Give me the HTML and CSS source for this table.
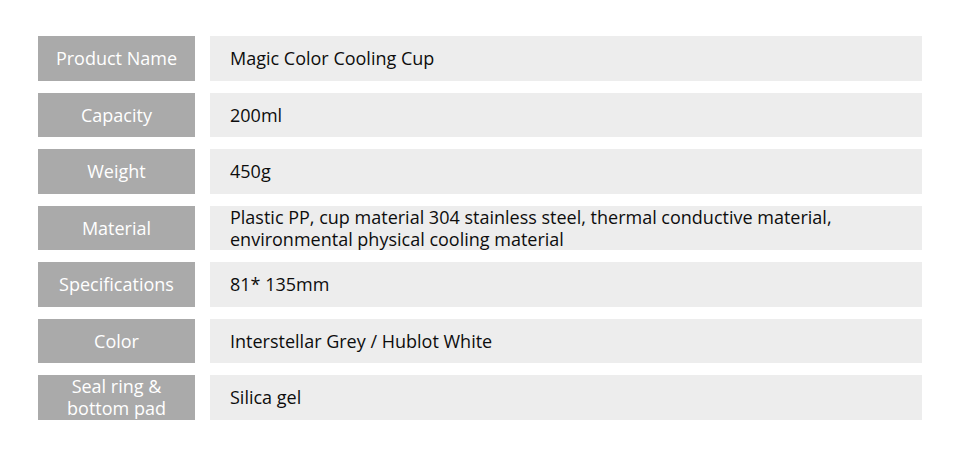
FILE: index.html
```html
<!DOCTYPE html>
<html lang="en">
<head>
<meta charset="utf-8">
<title>Magic Color Cooling Cup - Specifications</title>
<link rel="stylesheet" href="styles.css">
</head>
<body>
<main class="spec">
  <div class="spec-row">
    <div class="spec-label">Product Name</div>
    <div class="spec-value">Magic Color Cooling Cup</div>
  </div>
  <div class="spec-row">
    <div class="spec-label">Capacity</div>
    <div class="spec-value">200ml</div>
  </div>
  <div class="spec-row">
    <div class="spec-label">Weight</div>
    <div class="spec-value">450g</div>
  </div>
  <div class="spec-row">
    <div class="spec-label">Material</div>
    <div class="spec-value">Plastic PP, cup material 304 stainless steel, thermal conductive material,<br>environmental physical cooling material</div>
  </div>
  <div class="spec-row">
    <div class="spec-label">Specifications</div>
    <div class="spec-value">81* 135mm</div>
  </div>
  <div class="spec-row">
    <div class="spec-label">Color</div>
    <div class="spec-value">Interstellar Grey / Hublot White</div>
  </div>
  <div class="spec-row">
    <div class="spec-label">Seal ring &amp;<br>bottom pad</div>
    <div class="spec-value">Silica gel</div>
  </div>
</main>
</body>
</html>
```
FILE: styles.css
```css
html, body {
  margin: 0;
  padding: 0;
  background: #ffffff;
}

body {
  font-family: "Open Sans", "Noto Sans", "Liberation Sans", sans-serif;
  font-size: 18px;
  line-height: 22px;
  color: #0d0d0d;
}

.spec {
  display: flex;
  flex-direction: column;
  gap: 12px;
  width: 884px;
  padding: 36px 0 0 38px;
}

.spec-row {
  display: grid;
  grid-template-columns: 157px 1fr;
  column-gap: 15px;
  height: 44.5px;
}

.spec-label {
  display: flex;
  align-items: center;
  justify-content: center;
  text-align: center;
  background: #aaaaaa;
  color: #ffffff;
}

.spec-value {
  display: flex;
  align-items: center;
  padding-left: 20px;
  background: #ededed;
}
```
